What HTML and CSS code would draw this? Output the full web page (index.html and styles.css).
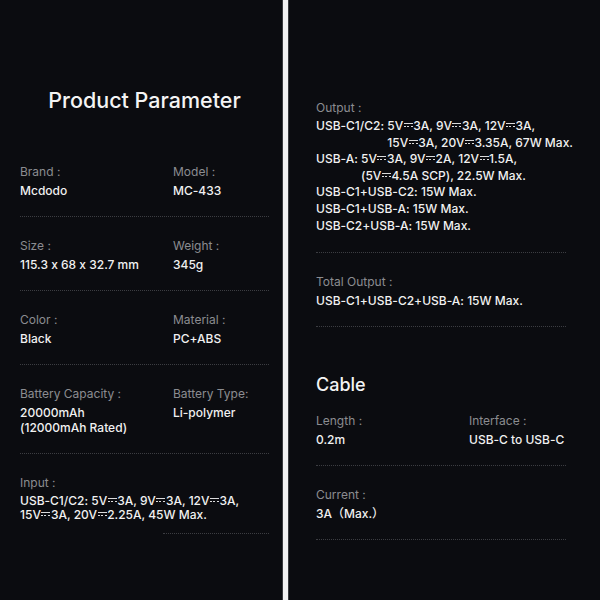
FILE: index.html
```html
<!DOCTYPE html>
<html lang="en">
<head>
<meta charset="utf-8">
<title>Product Parameter</title>
<link rel="stylesheet" href="styles.css">
</head>
<body>
<div class="page">
  <section class="panel left">
    <h1 class="title">Product Parameter</h1>
    <div class="row grid">
      <div><div class="label">Brand&nbsp;:</div><div class="value">Mcdodo</div></div>
      <div><div class="label">Model&nbsp;:</div><div class="value">MC-433</div></div>
    </div>
    <div class="row grid">
      <div><div class="label">Size&nbsp;:</div><div class="value">115.3 x 68 x 32.7 mm</div></div>
      <div><div class="label">Weight&nbsp;:</div><div class="value">345g</div></div>
    </div>
    <div class="row grid">
      <div><div class="label">Color&nbsp;:</div><div class="value">Black</div></div>
      <div><div class="label">Material&nbsp;:</div><div class="value">PC+ABS</div></div>
    </div>
    <div class="row grid">
      <div><div class="label">Battery Capacity&nbsp;:</div><div class="value">20000mAh<br>(12000mAh Rated)</div></div>
      <div><div class="label">Battery Type:</div><div class="value">Li-polymer</div></div>
    </div>
    <div class="row last">
      <div class="label">Input&nbsp;:</div>
      <div class="value tight">USB-C1/C2: 5V<span class="dc"></span>3A, 9V<span class="dc"></span>3A, 12V<span class="dc"></span>3A,<br>15V<span class="dc"></span>3A, 20V<span class="dc"></span>2.25A, 45W Max.</div>
    </div>
    <div class="partial-line"></div>
  </section>
  <div class="divider"></div>
  <section class="panel right">
    <div class="row">
      <div class="label">Output&nbsp;:</div>
      <div class="spec-list">
        <div class="spec"><span class="key">USB-C1/C2:&nbsp;</span><span>5V<span class="dc"></span>3A, 9V<span class="dc"></span>3A, 12V<span class="dc"></span>3A,<br>15V<span class="dc"></span>3A, 20V<span class="dc"></span>3.35A, 67W Max.</span></div>
        <div class="spec"><span class="key">USB-A:&nbsp;</span><span>5V<span class="dc"></span>3A, 9V<span class="dc"></span>2A, 12V<span class="dc"></span>1.5A,<br>(5V<span class="dc"></span>4.5A SCP), 22.5W Max.</span></div>
        <div class="spec">USB-C1+USB-C2: 15W Max.</div>
        <div class="spec">USB-C1+USB-A: 15W Max.</div>
        <div class="spec">USB-C2+USB-A: 15W Max.</div>
      </div>
    </div>
    <div class="row">
      <div class="label">Total Output&nbsp;:</div>
      <div class="value">USB-C1+USB-C2+USB-A: 15W Max.</div>
    </div>
    <h2 class="subtitle">Cable</h2>
    <div class="row grid first">
      <div><div class="label">Length&nbsp;:</div><div class="value">0.2m</div></div>
      <div><div class="label">Interface&nbsp;:</div><div class="value">USB-C to USB-C</div></div>
    </div>
    <div class="row">
      <div class="label">Current&nbsp;:</div>
      <div class="value">3A（Max.）</div>
    </div>
  </section>
</div>
</body>
</html>
```
FILE: styles.css
```css
* { box-sizing: border-box; }
html, body { margin: 0; padding: 0; }
body {
  width: 600px;
  height: 600px;
  overflow: hidden;
  background: #0b0c10;
  font-family: Inter, "Noto Sans", "Noto Sans CJK SC", sans-serif;
  font-feature-settings: "calt" 0;
  color: #f1f1f1;
}
.page {
  display: flex;
  width: 600px;
  height: 600px;
}
.panel {
  height: 600px;
  background: #0b0c10;
  min-width: 0;
}
.left {
  width: 283px;
  flex: none;
  padding: 88px 13px 0 20px;
  border-right: 1px solid #3a3b3e;
}
.divider {
  width: 5px;
  flex: none;
  background: #f2f2f2;
}
.right {
  flex: 1 1 0;
  padding: 79px 34px 0 27px;
  border-left: 1px solid #3a3b3e;
}
.title {
  margin: 0 0 31px;
  font-size: 21.5px;
  line-height: 24px;
  font-weight: 500;
  text-align: center;
  color: #f4f4f4;
  white-space: nowrap;
}
.subtitle {
  margin: 47px 0 17px;
  font-size: 18px;
  line-height: 22px;
  font-weight: 500;
  color: #f4f4f4;
}
.row {
  padding: 21px 0 18px;
  border-bottom: 1px dotted #3c3d42;
}
.row.first { padding-top: 0; }
.row.last {
  border-bottom: none;
  padding-bottom: 11px;
}
.partial-line {
  margin-left: 143px;
  border-top: 1px dotted #3c3d42;
}
.grid {
  display: grid;
  grid-template-columns: 153px 1fr;
}
.label {
  font-size: 12px;
  line-height: 16px;
  font-weight: 400;
  color: #8b8c90;
}
.value {
  margin-top: 3px;
  font-size: 12px;
  line-height: 15px;
  font-weight: 500;
  color: #f1f1f1;
  white-space: nowrap;
}
.value.tight { line-height: 14px; }
.spec-list {
  margin-top: 2px;
  font-size: 12px;
  line-height: 16.6px;
  font-weight: 500;
  color: #f1f1f1;
  white-space: nowrap;
}
.spec { display: flex; }
.key { white-space: pre; }
.dc {
  display: inline-block;
  width: 9px;
  height: 4px;
  margin: 0 0.5px;
  vertical-align: 3px;
  border-top: 1px solid currentColor;
  background: repeating-linear-gradient(90deg, currentColor 0 2px, transparent 2px 3.5px) left bottom / 100% 1px no-repeat;
  opacity: 0.9;
}
```
